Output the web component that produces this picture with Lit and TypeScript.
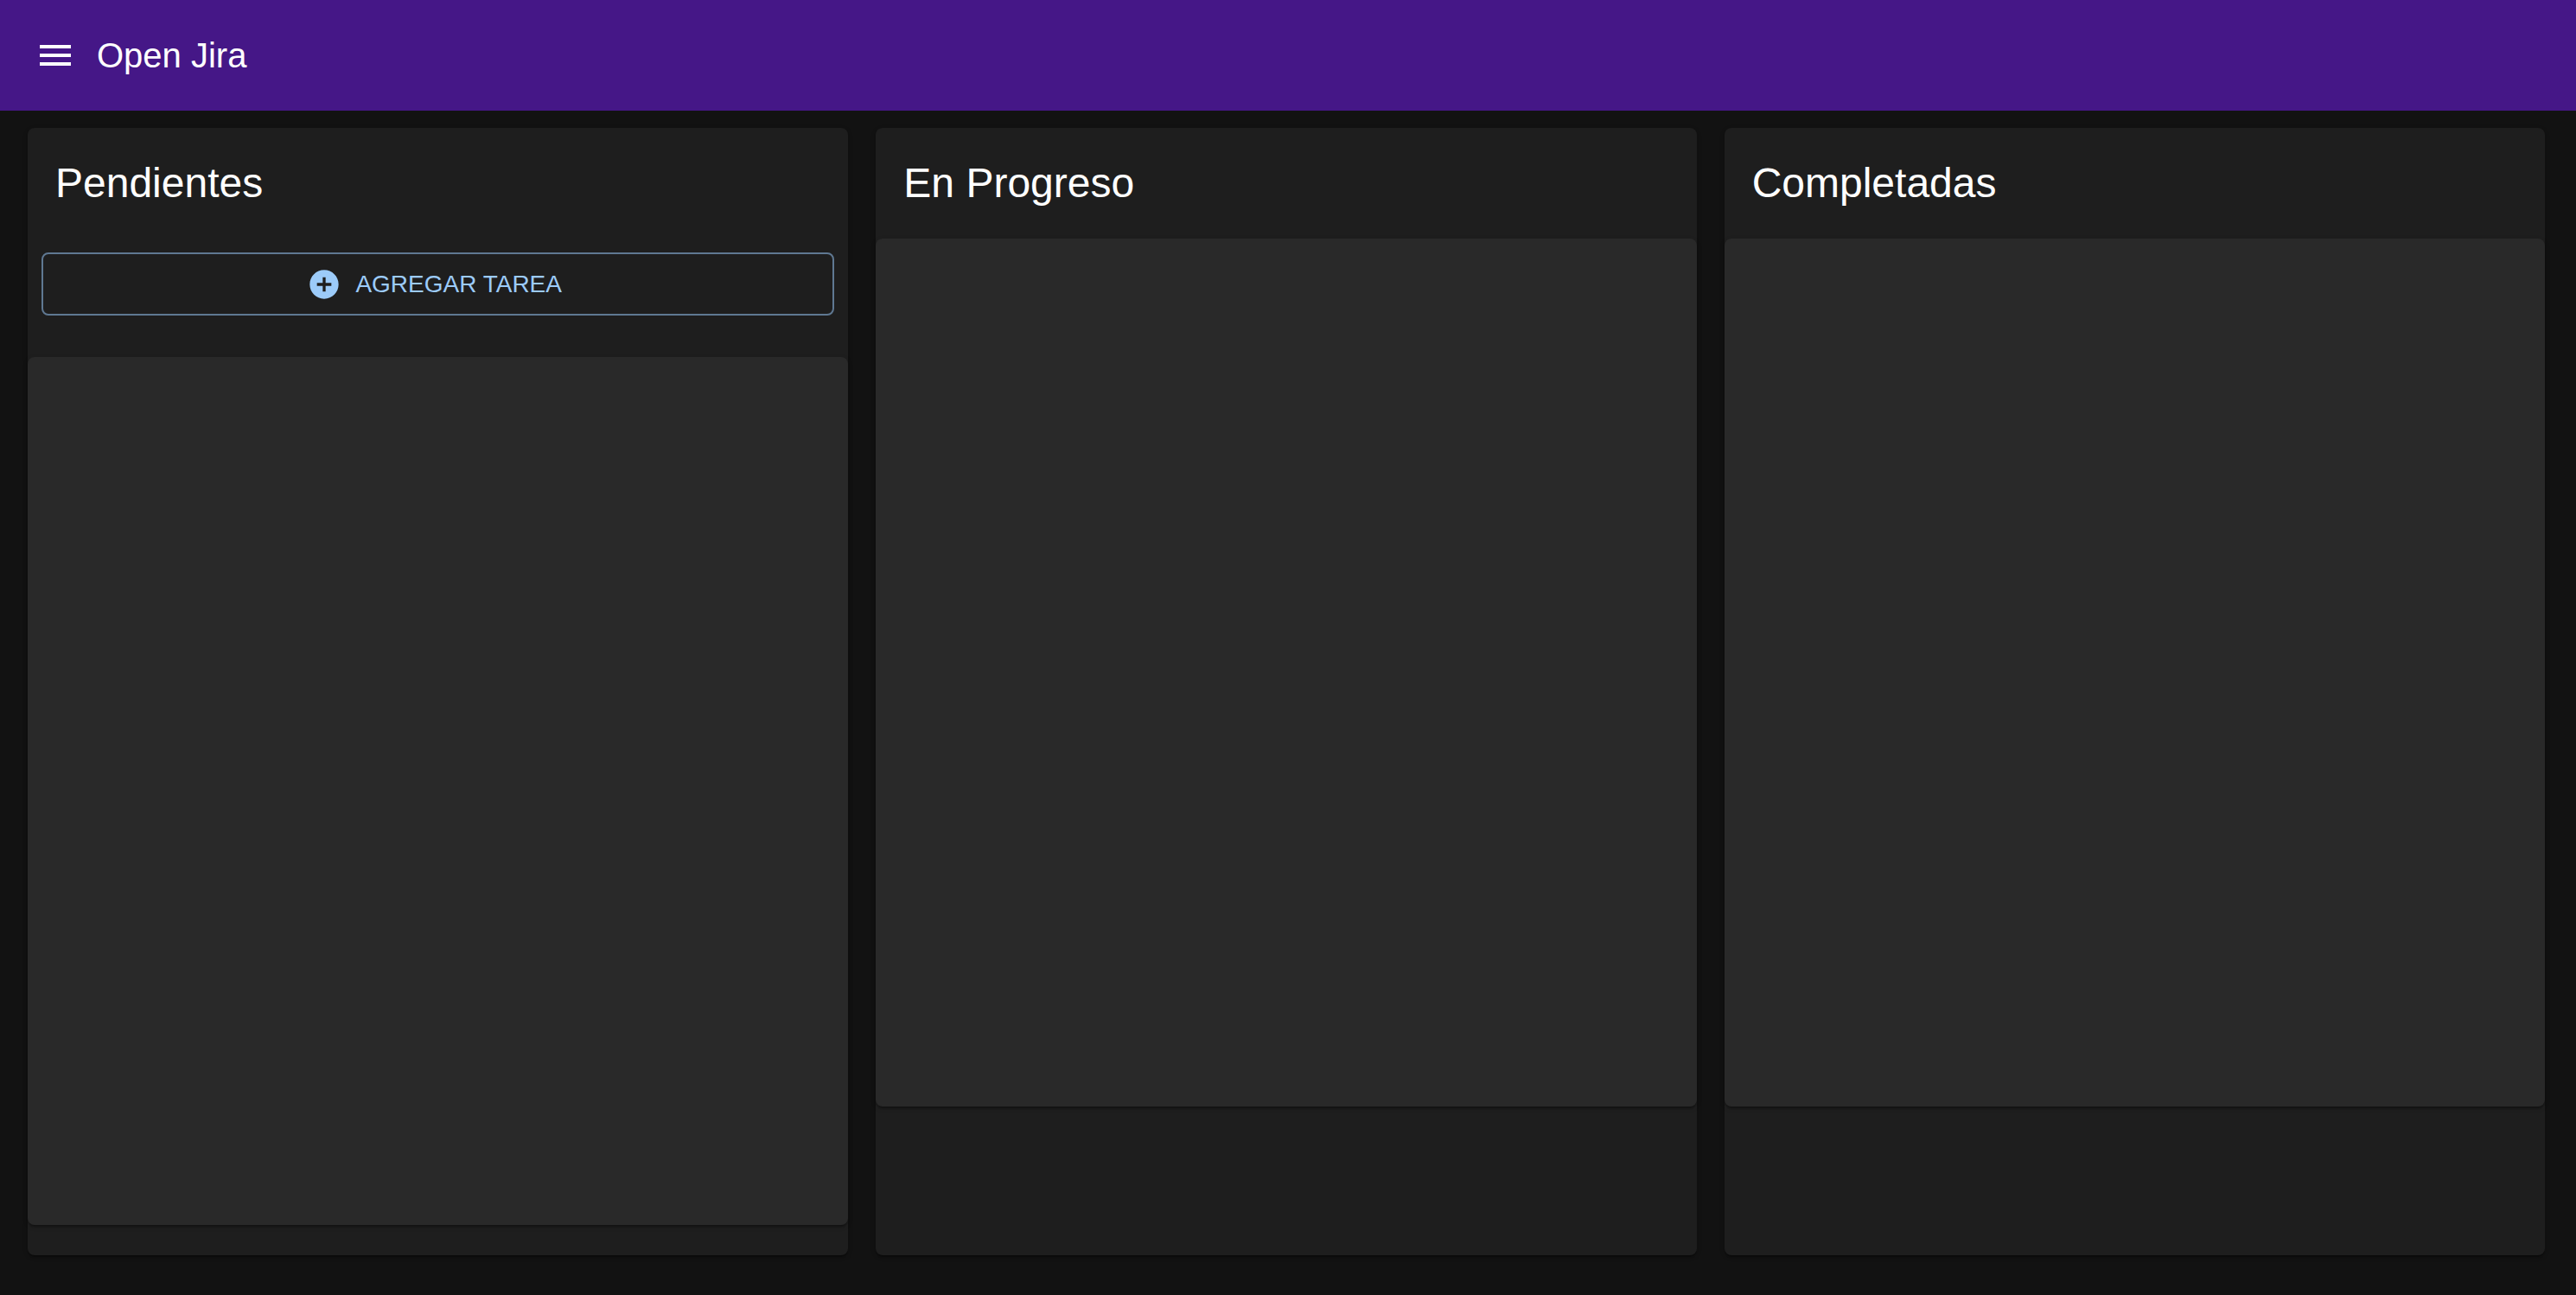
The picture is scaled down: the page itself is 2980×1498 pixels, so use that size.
import { LitElement, html, css, svg, nothing } from "lit";
import { customElement, property } from "lit/decorators.js";

interface Column {
  title: string;
  canAdd: boolean;
}

const COLUMNS: Column[] = [
  { title: "Pendientes", canAdd: true },
  { title: "En Progreso", canAdd: false },
  { title: "Completadas", canAdd: false },
];

const menuIcon = svg`<path d="M3 18h18v-2H3v2zm0-5h18v-2H3v2zm0-7v2h18V6H3z"></path>`;
const addIcon = svg`<path d="M12 2C6.48 2 2 6.48 2 12s4.48 10 10 10 10-4.48 10-10S17.52 2 12 2zm5 11h-4v4h-2v-4H7v-2h4V7h2v4h4v2z"></path>`;

@customElement("nav-bar")
export class NavBar extends LitElement {
  static styles = css`
    :host {
      display: block;
    }
    .bar {
      display: flex;
      align-items: center;
      gap: 8px;
      box-sizing: border-box;
      min-height: 128px;
      padding: 0 24px;
      background: #451787;
      color: #fff;
    }
    .menu {
      display: flex;
      padding: 16px;
      border: 0;
      border-radius: 50%;
      background: none;
      color: inherit;
      cursor: pointer;
    }
    .icon {
      width: 48px;
      height: 48px;
      fill: currentColor;
    }
    .title {
      margin: 0;
      font-size: 40px;
      font-weight: 400;
      line-height: 64px;
    }
  `;

  render() {
    return html`
      <header class="bar">
        <button class="menu" type="button" aria-label="Menú">
          <svg class="icon" viewBox="0 0 24 24" aria-hidden="true">${menuIcon}</svg>
        </button>
        <h1 class="title">Open Jira</h1>
      </header>
    `;
  }
}

@customElement("task-column")
export class TaskColumn extends LitElement {
  @property() heading = "";
  @property({ type: Boolean }) canAdd = false;

  static styles = css`
    :host {
      display: flex;
      min-width: 0;
    }
    .card {
      flex: 1;
      min-width: 0;
      border-radius: 8px;
      background: #1e1e1e;
      box-shadow:
        0 4px 2px -2px rgba(0, 0, 0, 0.2),
        0 2px 2px rgba(0, 0, 0, 0.14),
        0 2px 6px rgba(0, 0, 0, 0.12);
    }
    .title {
      margin: 0;
      padding: 32px;
      font-size: 48px;
      font-weight: 400;
      line-height: 64px;
    }
    .actions {
      padding: 16px 16px 48px;
    }
    .add {
      display: flex;
      align-items: center;
      justify-content: center;
      gap: 16px;
      box-sizing: border-box;
      width: 100%;
      padding: 10px 30px;
      border: 2px solid #5f7892;
      border-radius: 8px;
      background: none;
      color: #9ccbf9;
      font: inherit;
      font-size: 28px;
      line-height: 49px;
      text-transform: uppercase;
      cursor: pointer;
    }
    .icon {
      width: 40px;
      height: 40px;
      margin-left: -8px;
      fill: currentColor;
    }
    .list {
      height: calc(100vh - 494px);
      border-radius: 8px;
      background: #292929;
      box-shadow:
        0 4px 2px -2px rgba(0, 0, 0, 0.2),
        0 2px 2px rgba(0, 0, 0, 0.14),
        0 2px 6px rgba(0, 0, 0, 0.12);
    }
  `;

  render() {
    return html`
      <section class="card">
        <h2 class="title">${this.heading}</h2>
        ${this.canAdd
          ? html`<div class="actions">
              <button class="add" type="button">
                <svg class="icon" viewBox="0 0 24 24" aria-hidden="true">${addIcon}</svg>
                Agregar tarea
              </button>
            </div>`
          : nothing}
        <div class="list"></div>
      </section>
    `;
  }
}

@customElement("app-root")
export class AppRoot extends LitElement {
  static styles = css`
    :host {
      display: flex;
      flex-direction: column;
      box-sizing: border-box;
      min-height: 100vh;
      background: #121212;
      color: #fff;
      font-family: Helvetica, "Liberation Sans", Arial, sans-serif;
    }
    .board {
      flex: 1;
      display: grid;
      grid-template-columns: repeat(3, minmax(0, 1fr));
      gap: 32px;
      padding: 20px 36px 46px 32px;
    }
  `;

  render() {
    return html`
      <nav-bar></nav-bar>
      <main class="board">
        ${COLUMNS.map(
          (column) => html`<task-column .heading=${column.title} .canAdd=${column.canAdd}></task-column>`,
        )}
      </main>
    `;
  }
}
